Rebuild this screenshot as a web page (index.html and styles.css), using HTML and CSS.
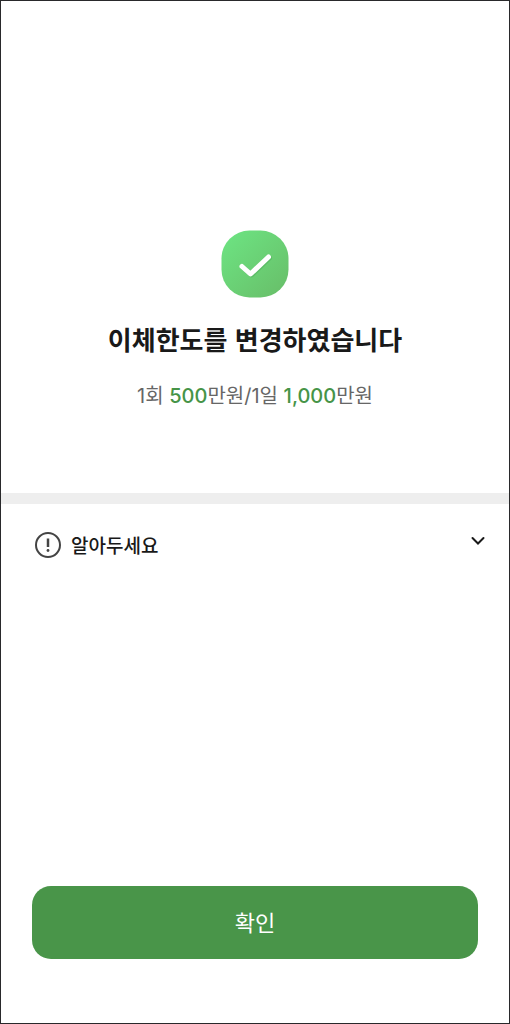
FILE: index.html
```html
<!DOCTYPE html>
<html lang="ko">
<head>
<meta charset="utf-8">
<meta name="viewport" content="width=device-width, initial-scale=1">
<title>이체한도 변경</title>
<link rel="stylesheet" href="styles.css">
</head>
<body>
<main class="screen">
  <section class="result">
    <svg class="result-icon" viewBox="0 0 68 68" aria-hidden="true">
      <defs>
        <linearGradient id="badge" x1="0" y1="0" x2="1" y2="1">
          <stop offset="0" stop-color="#6de583"/>
          <stop offset="1" stop-color="#68bd68"/>
        </linearGradient>
      </defs>
      <rect fill="url(#badge)" x=".5" y=".5" width="67" height="67" rx="28"/>
      <path class="tick-shadow" d="M22 37.500L30.500 45L48.500 28"/>
      <path class="tick" d="M21 36.500L29.500 44L47.500 27"/>
    </svg>
    <h1 class="title">이체한도를 변경하였습니다</h1>
    <p class="limits">1회 <strong class="amount">500</strong>만원/1일 <strong class="amount">1,000</strong>만원</p>
  </section>
  <section class="notice">
    <button class="notice-toggle" type="button" aria-expanded="false">
      <svg class="info-icon" viewBox="0 0 26 26" aria-hidden="true">
        <circle cx="13" cy="13" r="12"/>
        <path class="stem" d="M13 6.500V15"/>
        <circle class="dot" cx="13" cy="18.500" r="1.400"/>
      </svg>
      <span class="notice-label">알아두세요</span>
      <svg class="chevron" viewBox="0 0 14 10" aria-hidden="true"><path d="M1.500 2L7 7.500L12.500 2"/></svg>
    </button>
  </section>
  <footer class="actions">
    <button class="confirm" type="button">확인</button>
  </footer>
</main>
</body>
</html>
```
FILE: styles.css
```css
* {
  box-sizing: border-box;
}

body {
  margin: 0;
  background: #fff;
  color: #191919;
  font-family: "Noto Sans CJK KR", sans-serif;
}

button {
  border: 0;
  font: inherit;
  cursor: pointer;
}

.screen {
  display: flex;
  flex-direction: column;
  min-height: 100vh;
  border: 1px solid #29292b;
}

.result {
  display: flex;
  flex-direction: column;
  align-items: center;
  padding: 229px 24px 82px;
  border-bottom: 11px solid #eee;
}

.result-icon {
  width: 68px;
  height: 68px;
}

.tick,
.tick-shadow {
  fill: none;
  stroke: #fff;
  stroke-width: 5;
  stroke-linecap: round;
  stroke-linejoin: round;
}

.tick-shadow {
  stroke: #45a553;
  opacity: 0.4;
}

.title {
  margin: 21px 0 0;
  font-size: 26px;
  font-weight: 700;
  line-height: 40px;
}

.limits {
  margin: 22px 0 0;
  color: #666;
  font-family: Inter, "Noto Sans CJK KR", sans-serif;
  font-size: 20px;
  font-weight: 400;
  line-height: 30px;
}

.amount {
  color: #469447;
  font-weight: 500;
}

.notice {
  padding: 24px 24px 24px 34px;
}

.notice-toggle {
  display: flex;
  align-items: center;
  gap: 10px;
  width: 100%;
  padding: 0;
  background: none;
  color: inherit;
  text-align: left;
}

.info-icon {
  width: 26px;
  height: 26px;
  fill: none;
  stroke: #444;
  stroke-width: 2;
}

.info-icon .stem {
  stroke-width: 2.5;
}

.info-icon .dot {
  fill: #444;
  stroke: none;
}

.notice-label {
  flex: 1;
  font-size: 19px;
  font-weight: 500;
  line-height: 34px;
}

.chevron {
  width: 14px;
  height: 10px;
  margin-bottom: 8px;
  fill: none;
  stroke: #191919;
  stroke-width: 2;
  stroke-linecap: round;
}

.actions {
  display: flex;
  margin-top: auto;
  padding: 0 31px 64px;
}

.confirm {
  flex: 1;
  padding: 15px 16px 17px;
  border-radius: 19px;
  background: #499549;
  color: #fff;
  font-size: 22px;
  line-height: 41px;
}
```
